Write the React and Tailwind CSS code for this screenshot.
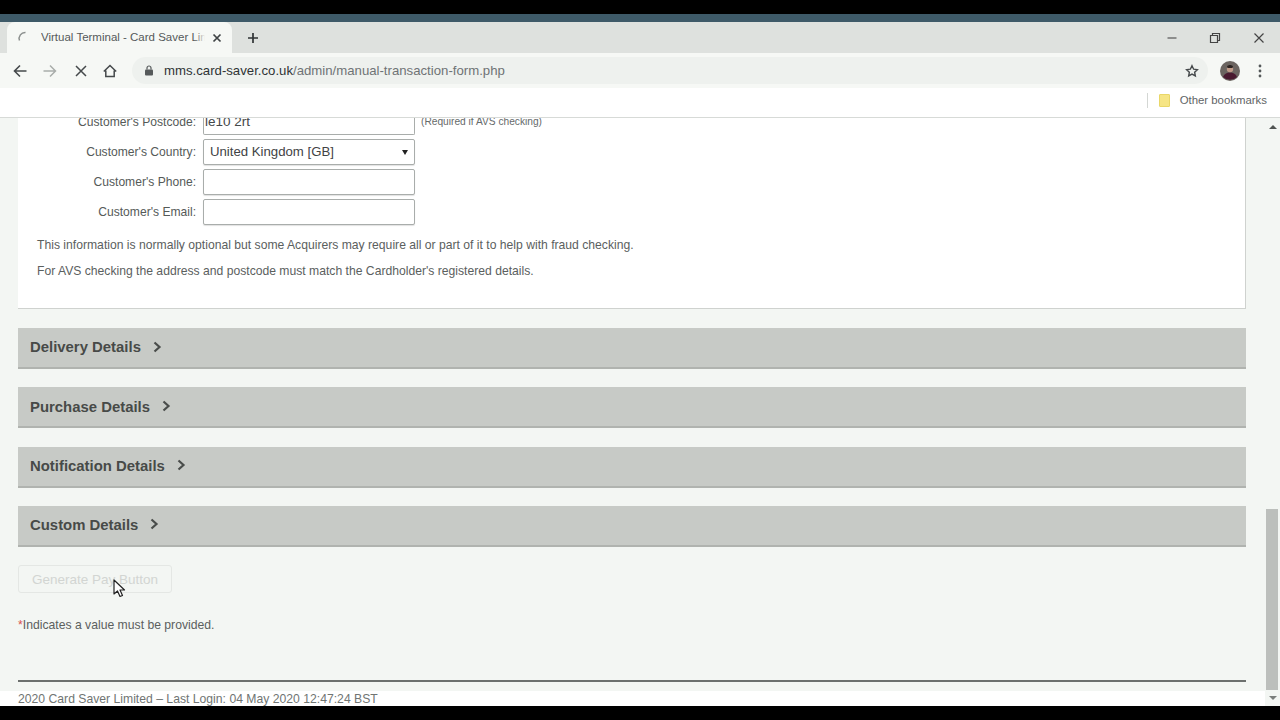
import React from "react";

const F = "font-['Liberation_Sans',Arial,sans-serif]";

function Row({ label, children }) {
  return (
    <div className="flex items-center h-[30px]">
      <div className="w-[185px] text-right text-[12.100px] text-[#555a58] pr-[7px] shrink-0">{label}</div>
      {children}
    </div>
  );
}

const inputCls = "w-[212px] h-[26px] border border-[#a9adab] rounded-[2px] bg-white shadow-[0_1px_1px_rgba(0,0,0,0.12)]";

function Accordion({ title }) {
  return (
    <div className="h-[41px] bg-[#c7cac6] border-b-2 border-[#b0b3af] flex items-center pl-[12px] gap-[11px]">
      <span className="text-[14.900px] font-bold text-[#474a48]">{title}</span>
      <svg width="10" height="12" viewBox="0 0 10 12" fill="none" stroke="#4a4d4b" strokeWidth="2.2" className="mb-[2px]"><path d="M2.5 1.5 7.5 6l-5 4.5" /></svg>
    </div>
  );
}

export default function App() {
  return (
    <div className={`${F} w-[1280px] h-[720px] overflow-hidden flex flex-col bg-black`}>
      <div className="h-[14px] bg-black shrink-0" />
      <div className="h-[8px] bg-[#3e5a68] shrink-0" />

      {/* Tab strip */}
      <div className="h-[31px] bg-[#dee1de] shrink-0 flex items-stretch">
        <div className="w-[225px] ml-[7px] bg-[#f6f8f5] rounded-t-[8px] flex items-center pl-[10px] shrink-0">
          <svg width="14" height="14" viewBox="0 0 14 14" fill="none" stroke="#8b8f8d" strokeWidth="1.5" className="shrink-0"><path d="M8.500 1.500A6 6 0 0 0 2.500 9.500" /></svg>
          <div className="relative ml-[10px] w-[164px] overflow-hidden shrink-0">
            <span className="block whitespace-nowrap text-[11.500px] text-[#55595a]">Virtual Terminal - Card Saver Limited</span>
            <div className="absolute right-0 top-0 bottom-0 w-[10px] bg-gradient-to-r from-transparent to-[#f6f8f5]" />
          </div>
          <svg width="10" height="10" viewBox="0 0 10 10" stroke="#3f4345" strokeWidth="1.7" className="ml-[7px] shrink-0"><path d="M1.5 1.5l7 7M8.5 1.5l-7 7" /></svg>
        </div>
        <div className="flex items-center ml-[15px] flex-1">
          <svg width="12" height="12" viewBox="0 0 12 12" stroke="#2f3335" strokeWidth="1.7"><path d="M6 1v10M1 6h10" /></svg>
          <div className="ml-auto flex items-center">
            <svg width="12" height="12" viewBox="0 0 12 12" stroke="#555" strokeWidth="1.2" className="mr-[31px]"><path d="M1.5 6h9" /></svg>
            <svg width="12" height="12" viewBox="0 0 12 12" fill="none" stroke="#444" strokeWidth="1.2" className="mr-[32px]"><path d="M1.5 3.500h7v7h-7zM3.500 3.500v-2h7v7h-2" /></svg>
            <svg width="12" height="12" viewBox="0 0 12 12" stroke="#444" strokeWidth="1.2" className="mr-[15px]"><path d="M1.5 1.500l9 9M10.500 1.500l-9 9" /></svg>
          </div>
        </div>
      </div>

      {/* Toolbar */}
      <div className="h-[35px] bg-[#f6f8f5] shrink-0 flex items-center pl-[13px]">
        <svg width="14" height="14" viewBox="0 0 14 14" fill="none" stroke="#45494b" strokeWidth="1.6"><path d="M13.500 7H1.500M7 1.500 1.500 7 7 12.500" /></svg>
        <svg width="14" height="14" viewBox="0 0 14 14" fill="none" stroke="#a9adab" strokeWidth="1.5" className="ml-[16px]"><path d="M.5 7h12M7 1.500 12.500 7 7 12.500" /></svg>
        <svg width="12" height="12" viewBox="0 0 12 12" stroke="#45494b" strokeWidth="1.5" className="ml-[18px]"><path d="M1 1l10 10M11 1 1 11" /></svg>
        <svg width="14" height="14" viewBox="0 0 14 14" fill="none" stroke="#45494b" strokeWidth="1.5" className="ml-[16px]"><path d="M.8 7.500 7 1.500l6.200 6M2.800 6.500v6h8.400v-6" /></svg>
        <div className="ml-[15px] w-[1076px] h-[27px] bg-[#eef1ee] rounded-full flex items-center pl-[11px]">
          <svg width="10" height="11" viewBox="0 0 10 11" className="shrink-0 ml-[1px]"><rect x="1" y="4.500" width="8" height="6" rx="1" fill="#55595a" /><path d="M3 4.500V3a2 2 0 0 1 4 0v1.500" fill="none" stroke="#55595a" strokeWidth="1.2" /></svg>
          <span className="ml-[10px] text-[13.200px] text-[#6e7375] whitespace-nowrap"><span className="text-[#2f3335]">mms.card-saver.co.uk</span>/admin/manual-transaction-form.php</span>
          <svg width="14" height="14" viewBox="0 0 24 24" fill="none" stroke="#45494b" strokeWidth="2.400" className="ml-auto mr-[9px]"><path d="M12 3l2.800 5.900 6.400.8-4.700 4.400 1.200 6.400L12 17.400l-5.700 3.100 1.200-6.400-4.700-4.400 6.400-.8z" /></svg>
        </div>
        <svg width="20" height="20" viewBox="0 0 20 20" className="ml-[12px] shrink-0">
          <circle cx="10" cy="10" r="10" fill="#6b6460" />
          <path d="M3 16c1.500-3.500 4-4.500 7-4.500s5.500 1 7 4.500a10 10 0 0 1-14 0z" fill="#4a1a30" />
          <circle cx="10" cy="8" r="3.200" fill="#c09a88" />
          <path d="M7 5.500c1-2 5-2 6 0l-.5 1.500h-5z" fill="#2c2422" />
        </svg>
        <svg width="4" height="14" viewBox="0 0 4 14" fill="#55595a" className="ml-[18px]"><circle cx="2" cy="2" r="1.400" /><circle cx="2" cy="7" r="1.400" /><circle cx="2" cy="12" r="1.400" /></svg>
      </div>

      {/* Bookmarks */}
      <div className="h-[30px] bg-white border-b border-[#d7dad7] shrink-0 flex items-center justify-end pr-[13px] pb-[4px]">
        <div className="w-px h-[15px] bg-[#d4d7d4] mr-[11px]" />
        <div className="w-[11px] h-[13px] bg-[#f6e585] border border-[#e9d768] rounded-[1px] mr-[10px]" />
        <span className="text-[11.400px] text-[#5f6466]">Other bookmarks</span>
      </div>

      {/* Page */}
      <div className="h-[588px] shrink-0 flex bg-[#f3f6f3] overflow-hidden">
        <div className="w-[1265px] pl-[18px] pr-[19px] shrink-0">
          <div className="w-[1228px] h-[191px] bg-white border-r border-b border-[#cfd2cf] overflow-hidden">
            <div className="flex items-start h-[17px]">
              <div className="w-[185px] text-right text-[12.100px] leading-[8px] text-[#555a58] pr-[7px] shrink-0">Customer's Postcode:</div>
              <div className="w-[212px] h-[17px] border border-t-0 border-[#a9adab] rounded-b-[2px] bg-white pl-[1px] text-[13.500px] leading-[8px] text-[#444849] shrink-0">le10 2rt</div>
              <div className="ml-[6px] text-[10.200px] leading-[7px] text-[#666a6b]">(Required if AVS checking)</div>
            </div>
            <div className="h-[2px]" />
            <Row label="Customer's Country:">
              <div className={`${inputCls} flex items-center pl-[6px] pr-[6px] text-[13.200px] text-[#3f4345]`}>
                <span>United Kingdom [GB]</span>
                <span className="ml-auto w-0 h-0 border-l-[3px] border-r-[3px] border-t-[5px] border-l-transparent border-r-transparent border-t-[#222]" />
              </div>
            </Row>
            <Row label="Customer's Phone:"><div className={inputCls} /></Row>
            <Row label="Customer's Email:"><div className={inputCls} /></Row>
            <p className="ml-[19px] mt-[11px] text-[12.170px] leading-[14px] text-[#5b605e] whitespace-nowrap">This information is normally optional but some Acquirers may require all or part of it to help with fraud checking.</p>
            <p className="ml-[19px] mt-[12px] text-[12.170px] leading-[14px] text-[#5b605e] whitespace-nowrap">For AVS checking the address and postcode must match the Cardholder's registered details.</p>
          </div>

          <div className="w-[1228px] mt-[19px] flex flex-col gap-[18.250px]">
            <Accordion title="Delivery Details" />
            <Accordion title="Purchase Details" />
            <Accordion title="Notification Details" />
            <Accordion title="Custom Details" />
          </div>

          <div className="relative mt-[18px] w-[154px] h-[28px] border border-[#e4e7e4] rounded-[3px] flex items-center justify-center pt-[2px] text-[13.500px] text-[#d2d5d2]">
            Generate Pay Button
            <svg width="13" height="19" viewBox="0 0 13 19" className="absolute left-[94px] top-[13px]"><path d="M1 1v14l3.500-3 2.500 5.500 2.500-1-2.500-5.500h4.500z" fill="#fff" stroke="#222" strokeWidth="1.200" strokeLinejoin="round" /></svg>
          </div>

          <p className="mt-[25px] text-[12.200px] leading-[14px] text-[#5b605e]"><span className="text-[#d9534f]">*</span>Indicates a value must be provided.</p>

          <div className="w-[1228px] mt-[48px] h-[2px] bg-[#6c706e]" />
          <div className="w-[1265px] -ml-[18px] pl-[18px] mt-[9px] pt-[1px] bg-white text-[12.200px] leading-[14px] text-[#707573] whitespace-nowrap">2020 Card Saver Limited – Last Login: 04 May 2020 12:47:24 BST</div>
        </div>

        {/* Scrollbar */}
        <div className="w-[15px] shrink-0 bg-[#f3f6f3] flex flex-col items-center">
          <div className="h-[17px] flex items-center"><span className="w-0 h-0 border-l-[4px] border-r-[4px] border-b-[4px] border-l-transparent border-r-transparent border-b-[#505452]" /></div>
          <div className="flex-1 w-full min-h-0 flex flex-col">
            <div className="h-[374px]" />
            <div className="h-[181px] w-[12px] ml-[1px] bg-[#bcbfbc]" />
          </div>
          <div className="h-[16px] flex items-center"><span className="w-0 h-0 border-l-[4px] border-r-[4px] border-t-[4px] border-l-transparent border-r-transparent border-t-[#7a7e7c]" /></div>
        </div>
      </div>
      <div className="flex-1 bg-black" />
    </div>
  );
}
